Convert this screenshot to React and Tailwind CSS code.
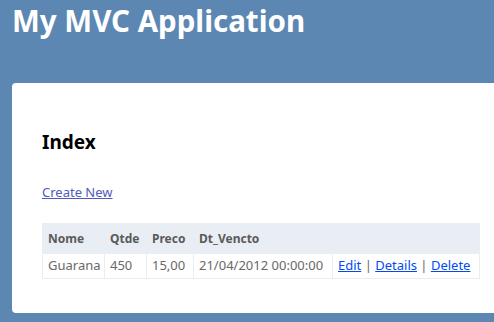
export default function App() {
  const font = { fontFamily: '"Noto Sans", "DejaVu Sans", sans-serif' };
  return (
    <div className="w-[494px] h-[322px] overflow-hidden bg-[#5c87b2]" style={font}>
      <div className="h-[83px] pl-3 pt-[1px]">
        <h1 className="text-[29.5px] leading-[40px] font-bold text-white">My MVC Application</h1>
      </div>
      <div className="ml-3 h-[230px] bg-white rounded-l-[4px] pl-[30px] pt-[47px]">
        <h2 className="text-[19px] leading-[24px] font-bold text-black">Index</h2>
        <div className="mt-[30px] text-[13px] leading-[16px]">
          <a href="#" className="text-[#505abc] underline">Create New</a>
        </div>
        <table className="mt-[23px] table-fixed w-[438px] border-collapse border border-[#e8eef4] text-[13px] text-[#696969]">
          <thead>
            <tr className="bg-[#e8eef4] text-[#5a5a5a] text-[12px]">
              <th className="w-[62px] h-[30px] px-[5px] text-left font-bold border border-[#e8eef4]">Nome</th>
              <th className="w-[42px] px-[5px] text-left font-bold border border-[#e8eef4]">Qtde</th>
              <th className="w-[47px] px-[5px] text-left font-bold border border-[#e8eef4]">Preco</th>
              <th className="w-[139px] px-[5px] text-left font-bold border border-[#e8eef4]">Dt_Vencto</th>
              <th className="px-[5px] border border-[#e8eef4]"></th>
            </tr>
          </thead>
          <tbody>
            <tr>
              <td className="h-[25px] px-[5px] border border-[#e8eef4] whitespace-nowrap">Guarana</td>
              <td className="px-[5px] border border-[#e8eef4]">450</td>
              <td className="px-[5px] border border-[#e8eef4]">15,00</td>
              <td className="px-[5px] border border-[#e8eef4] whitespace-nowrap">21/04/2012 00:00:00</td>
              <td className="px-[5px] border border-[#e8eef4] whitespace-nowrap">
                <a href="#" className="text-[#034af3] underline">Edit</a>
                {" | "}
                <a href="#" className="text-[#034af3] underline">Details</a>
                {" | "}
                <a href="#" className="text-[#034af3] underline">Delete</a>
              </td>
            </tr>
          </tbody>
        </table>
      </div>
    </div>
  );
}
